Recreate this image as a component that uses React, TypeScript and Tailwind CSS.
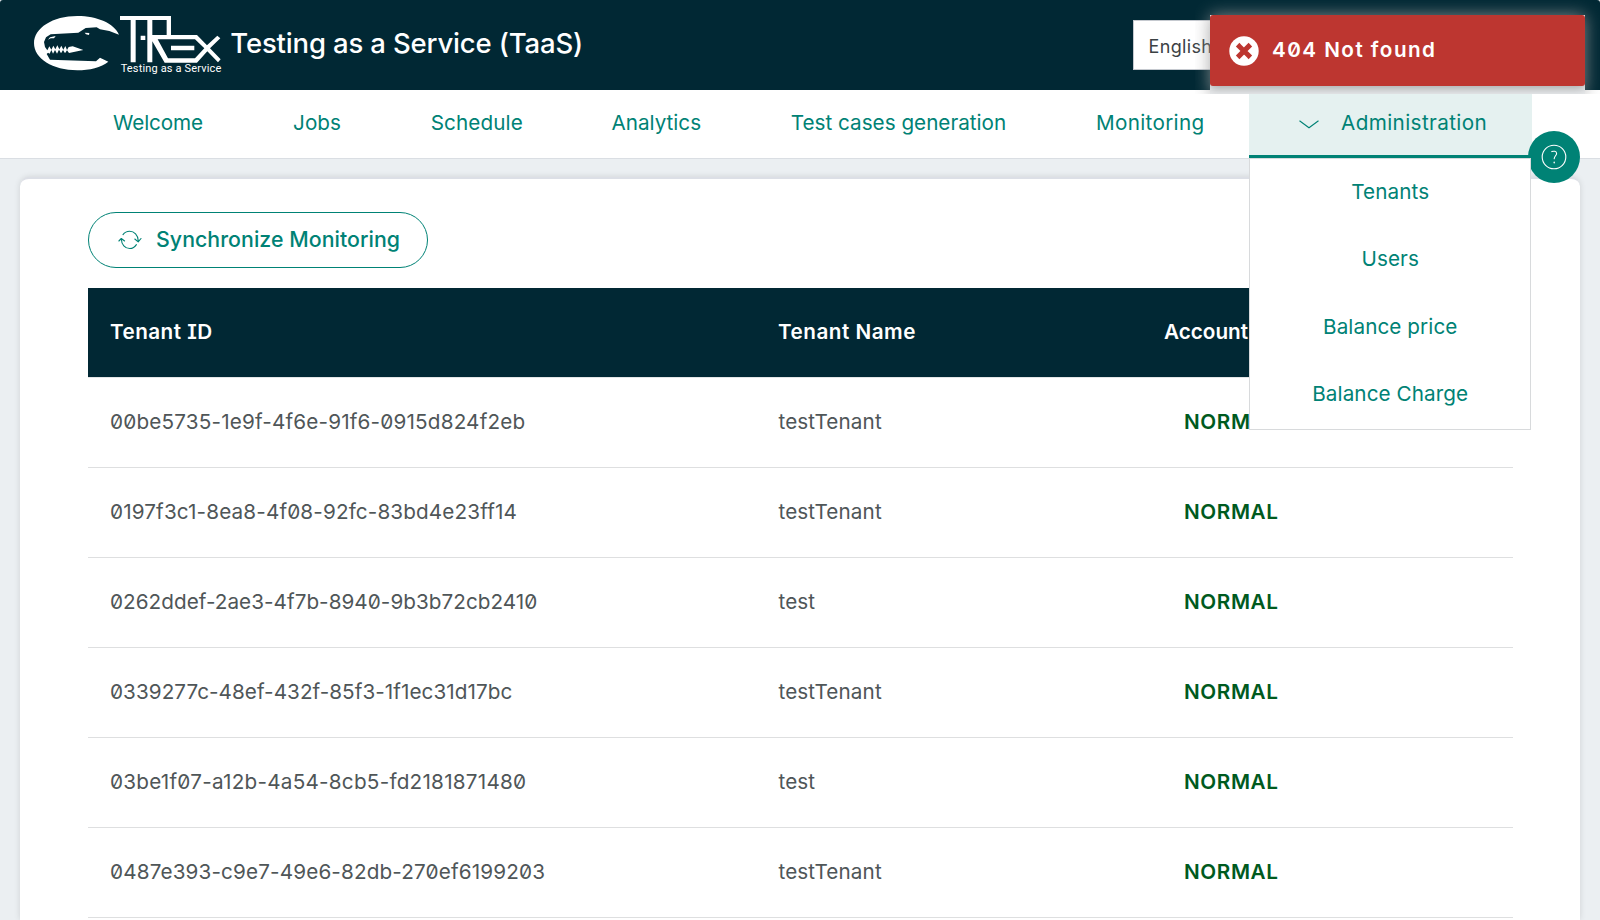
import clsx from "clsx";

const navItems = [
  { label: "Welcome", className: "w-[179px] tracking-[-0.15px]" },
  { label: "Jobs", className: "w-[139px]" },
  { label: "Schedule", className: "w-[180.5px] tracking-[0.1px]" },
  { label: "Analytics", className: "w-[178.5px]" },
  { label: "Test cases generation", className: "w-[306px]" },
  { label: "Monitoring", className: "w-[197.5px] tracking-[0.3px]" },
];

const menuItems = ["Tenants", "Users", "Balance price", "Balance Charge"];

const tenants = [
  { id: "00be5735-1e9f-4f6e-91f6-0915d824f2eb", name: "testTenant", tracking: "tracking-[0.17px]" },
  { id: "0197f3c1-8ea8-4f08-92fc-83bd4e23ff14", name: "testTenant", tracking: "tracking-[0.13px]" },
  { id: "0262ddef-2ae3-4f7b-8940-9b3b72cb2410", name: "test", tracking: "tracking-[0.04px]" },
  { id: "0339277c-48ef-432f-85f3-1f1ec31d17bc", name: "testTenant", tracking: "tracking-[0.05px]" },
  { id: "03be1f07-a12b-4a54-8cb5-fd2181871480", name: "test", tracking: "tracking-[0.24px]" },
  { id: "0487e393-c9e7-49e6-82db-270ef6199203", name: "testTenant", tracking: "tracking-[0.14px]" },
];

function Logo() {
  return (
    <svg viewBox="36 42 574 182" className="mb-[1.33px] h-[60.67px] w-[191.33px]" fill="#fff">
      <path d="M297 104C282 70 232 48 172 48C98 48 42 84 42 130C42 176 98 211 172 211C208 211 244 202 265 185L240 173L228 184L90 179L80 162L84 158L89 161L94 150L99 161L105 150L111 161L117 149L123 160L129 150L135 160L141 151L147 159L190 150L158 139L146 141L141 150L136 138L130 149L124 137L118 148L112 136L106 148L100 137L94 149L88 139L82 151L75 141L72 126L78 112L92 103L175 98L197 84L230 82L240 88L268 93Z" />
      <path d="M84 119L90 112L107 108L102 115L92 115Z" />
      <path d="M194 98L208 99L207 105L198 103Z" />
      <path d="M300 48H453V105H531L561 136L592 107L601 115L570 145L602 178L594 187L562 154L531 188H434L397 124V187H382V60H347V187H332V60H300ZM397 60V105H440V60ZM413 118L444 175H525L553 145L525 118Z" fillRule="evenodd" />
      <path d="M453 137H523V151H453ZM362 107H376V120H362Z" />
      <text x="302" y="216" fontSize="33" textLength="302" lengthAdjust="spacing" className="font-['Roboto',sans-serif]">
        Testing as a Service
      </text>
    </svg>
  );
}

function SyncIcon() {
  return (
    <svg viewBox="0 0 24 20" className="h-5 w-6" fill="none" stroke="currentColor" strokeWidth="1.1" strokeLinecap="round" strokeLinejoin="round">
      <path d="M5 4.6C6.6 2.4 9 1.3 11.6 1.3C16.3 1.3 20 5 20.2 10.6M16.8 9L20.2 11.8L23 8.5" />
      <path d="M18.4 14.6C16.9 17 14.6 18.5 11.8 18.5C7 18.5 3.5 14.5 3.3 9M0.9 11L3.3 8.5L6.6 11" />
    </svg>
  );
}

function HelpIcon() {
  return (
    <svg viewBox="0 0 26 26" className="size-[26px]" fill="none" stroke="currentColor" strokeLinecap="round">
      <circle cx="13" cy="13" r="11.8" strokeWidth="1.1" />
      <path d="M10.8 7.6C12.5 6.8 15.6 7.1 15.6 9.4C15.6 11.6 13.2 12 13.2 14.8" strokeWidth="1.1" />
      <path d="M13.2 18.2V18.8" strokeWidth="1.4" />
    </svg>
  );
}

function ErrorIcon() {
  return (
    <svg viewBox="0 0 30 30" className="size-[30px]">
      <circle cx="15" cy="15" r="14.7" fill="#fff" />
      <path d="M10.4 10.4L19.6 19.6M19.6 10.4L10.4 19.6" stroke="#bd3630" strokeWidth="5" strokeLinecap="square" />
    </svg>
  );
}

export default function App() {
  return (
    <div className="relative flex h-[920px] w-[1600px] flex-col overflow-hidden bg-[#ebeff2] font-['Inter','Noto_Sans',sans-serif] text-[20.7px] leading-none text-[#4f5658] [font-feature-settings:'zero','cv08']">
      <header className="flex h-[90px] shrink-0 items-center rounded-t-[3px] bg-[#012834] pl-8 text-white">
        <Logo />
        <h1 className="ml-[7px] pb-[2px] text-[27.5px] font-medium tracking-[-0.16px] whitespace-nowrap">
          Testing as a Service (TaaS)
        </h1>
        <div className="mr-[47px] ml-auto flex h-[50px] w-[420px] items-center border border-[#c5c9cf] bg-white pt-[3px] pl-[14.5px] text-[18px] tracking-[0.35px] text-[#3b4144]">
          English
        </div>
      </header>

      <nav className="relative z-10 flex h-[69px] shrink-0 border-b border-[#dadee3] bg-white pl-[68.5px] text-[#008275]">
        {navItems.map((item) => (
          <a key={item.label} className={clsx("flex shrink-0 items-center justify-center pb-px whitespace-nowrap", item.className)}>
            {item.label}
          </a>
        ))}
        <button className="absolute top-[41px] left-[1528px] z-10 flex size-[52px] items-center justify-center rounded-full bg-[#008275] text-white">
          <HelpIcon />
        </button>
        <div className="relative w-[283px] shrink-0">
          <a className="flex h-[68px] items-center border-b-[3px] border-[#008275] bg-[#e5f1f0] pt-[2px] pl-[49.5px] tracking-[0.38px]">
            <svg viewBox="0 0 20 9" className="mt-px mr-[22.5px] h-[9px] w-5" fill="none" stroke="currentColor" strokeWidth="1.1">
              <path d="M0.5 0.8L10 7.8L19.5 0.8" />
            </svg>
            Administration
          </a>
          <div className="absolute top-[68px] left-0 z-20 flex w-[282px] flex-col border border-[#d8dadc] bg-white pl-[0.5px] tracking-[0.08px]">
            {menuItems.map((label) => (
              <a key={label} className="flex h-[67.4px] items-center justify-center pb-px">
                {label}
              </a>
            ))}
          </div>
        </div>
      </nav>

      <main className="mx-5 mt-[18px] flex-1 rounded-t-[9px] border-t-2 border-[#dcdfe6] bg-white px-[68px] pt-[33px] shadow-[0_0_6px_rgba(0,0,0,0.12)]">
        <button className="flex h-14 w-[340px] items-center rounded-full border border-[#008275] pl-[29px] text-[21.3px] font-medium tracking-[0.06px] whitespace-nowrap text-[#008275]">
          <span className="mr-[14px]">
            <SyncIcon />
          </span>
          Synchronize Monitoring
        </button>

        <div className="mt-5 w-[1425px]">
          <div className="grid h-[89px] grid-cols-[668px_386px_1fr] items-center bg-[#012834] pl-[22px] font-semibold text-white">
            <span className="tracking-[0.45px]">Tenant ID</span>
            <span className="tracking-[0.5px]">Tenant Name</span>
            <span>Account status</span>
          </div>
          <div className="border-t border-[#e3e5e6]">
            {tenants.map((t) => (
              <div key={t.id} className="grid h-[90px] grid-cols-[668px_406px_1fr] items-center border-b border-[#dedfe0] pl-[22px]">
                <span className={t.tracking}>{t.id}</span>
                <span className="pl-[0.5px] tracking-[0.1px]">{t.name}</span>
                <span className="font-semibold tracking-[0.6px] text-[#005a1e]">NORMAL</span>
              </div>
            ))}
          </div>
        </div>
      </main>

      <div className="absolute top-[15px] left-[1210px] z-30 shadow-[0_0_16px_rgba(153,153,153,0.85)] [clip-path:inset(-15px_-15px_0_-15px)]">
        <div className="h-[79px] w-[375px] overflow-hidden bg-[#e9ebed]">
          <div className="flex h-[71px] items-center rounded-[3px] bg-[#bd3630] pl-[19px] font-semibold tracking-[1.45px] text-white shadow-[0_3px_10px_rgba(0,0,0,0.28)]">
            <ErrorIcon />
            <span className="ml-[13px] pb-px">404 Not found</span>
          </div>
        </div>
      </div>
    </div>
  );
}
